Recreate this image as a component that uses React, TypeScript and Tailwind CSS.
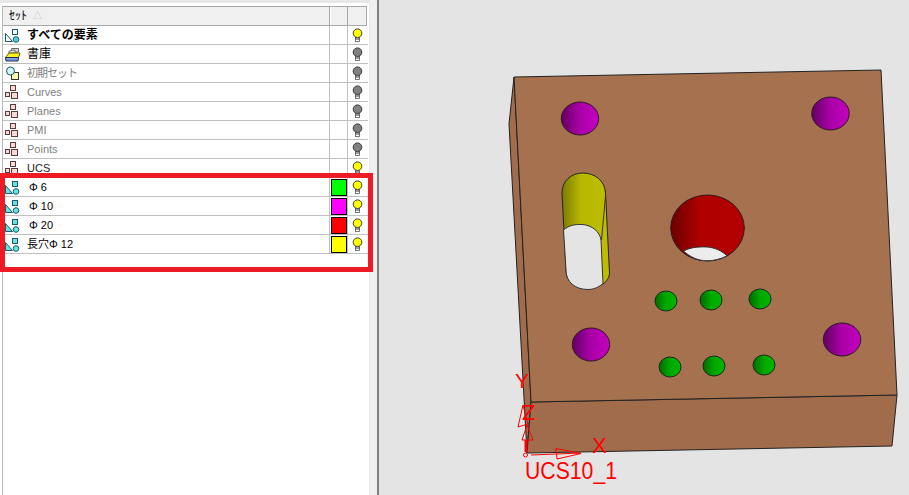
import React from "react";

const Bulb = ({ on }: { on: boolean }) => (
  <svg width="11" height="14" viewBox="0 0 11 14" className="block">
    <rect x="3.5" y="9" width="4" height="4.500" fill="#fff" stroke="#555" strokeWidth="0.8" />
    <path d="M3.500 11H7.500" stroke="#333" strokeWidth="1" fill="none" />
    <circle cx="5.500" cy="5.200" r="4.300" fill={on ? "#ffff00" : "#808080"} stroke="#3a3a3a" strokeWidth="1" />
  </svg>
);

const ElemIcon = ({ fill = "#66e3e0", soft = "#ffffff" }: { fill?: string; soft?: string }) => (
  <svg width="15" height="15" viewBox="0 0 15 15" className="block">
    <path d="M0.5 5.5V13.5H7.5Z" fill={soft} stroke="#1a5a6a" />
    <rect x="7.5" y="1.5" width="5" height="5" fill={soft} stroke="#1a5a6a" />
    <circle cx="11" cy="11.5" r="2.8" fill={fill} stroke="#1a5a6a" />
  </svg>
);

const BoxesIcon = () => (
  <svg width="15" height="15" viewBox="0 0 15 15" className="block">
    <rect x="5.5" y="0.5" width="5" height="5" fill="#ffd6d6" stroke="#5a3a3a" />
    <rect x="0.5" y="7.5" width="4" height="4" fill="#ffd6d6" stroke="#5a3a3a" />
    <rect x="6.5" y="7.5" width="6" height="6" fill="#ffd6d6" stroke="#5a3a3a" />
  </svg>
);

const LibraryIcon = () => (
  <svg width="16" height="15" viewBox="0 0 16 15" className="block">
    <path d="M6.500 1.500H13.500V5H6.500Z" fill="#d8d8d8" stroke="#666" />
    <path d="M4 4L10 3V6H4Z" fill="#e8e8e8" stroke="#777" />
    <path d="M0.500 10.500L4 6H15L13.500 10.500Z" fill="#ffee20" stroke="#6a6000" />
    <path d="M0.500 10.500H13.500L13 14H1Z" fill="#7f9fd8" stroke="#1a2a6a" />
  </svg>
);

const SetIcon = () => (
  <svg width="15" height="15" viewBox="0 0 15 15" className="block">
    <rect x="6.5" y="6.5" width="7" height="7" fill="#ffffb0" stroke="#333" />
    <circle cx="5.5" cy="5" r="4" fill="#d6f6fa" stroke="#1a5a6a" />
  </svg>
);

type Row = {
  label: string;
  icon: React.ReactNode;
  on: boolean;
  tone: string;
  swatch?: string;
};

const rows: Row[] = [
  { label: "すべての要素", icon: <ElemIcon fill="#55c8e8" />, on: true, tone: "font-bold text-black text-[12px]" },
  { label: "書庫", icon: <LibraryIcon />, on: false, tone: "text-black text-[12px]" },
  { label: "初期セット", icon: <SetIcon />, on: false, tone: "text-[#808080] text-[11px] tracking-[-1px]" },
  { label: "Curves", icon: <BoxesIcon />, on: false, tone: "text-[#808080] text-[11px]" },
  { label: "Planes", icon: <BoxesIcon />, on: false, tone: "text-[#808080] text-[11px]" },
  { label: "PMI", icon: <BoxesIcon />, on: false, tone: "text-[#808080] text-[11px]" },
  { label: "Points", icon: <BoxesIcon />, on: false, tone: "text-[#808080] text-[11px]" },
  { label: "UCS", icon: <BoxesIcon />, on: true, tone: "text-[#222] text-[11px]" },
  { label: "Φ 6", icon: <ElemIcon soft="#66e3e0" />, on: true, tone: "text-black text-[11px] pl-[2px]", swatch: "#00ff00" },
  { label: "Φ 10", icon: <ElemIcon soft="#66e3e0" />, on: true, tone: "text-black text-[11px] pl-[2px]", swatch: "#ff00ff" },
  { label: "Φ 20", icon: <ElemIcon soft="#66e3e0" />, on: true, tone: "text-black text-[11px] pl-[2px]", swatch: "#ff0000" },
  { label: "長穴Φ 12", icon: <ElemIcon soft="#66e3e0" />, on: true, tone: "text-black text-[11px]", swatch: "#ffff00" },
];

const Model = () => (
  <svg viewBox="379 0 530 495" className="block h-full w-full">
    <defs>
      <linearGradient id="purple" x1="0" x2="1" y1="0" y2="0">
        <stop offset="0" stopColor="#630063" />
        <stop offset="0.5" stopColor="#ab00a8" />
        <stop offset="1" stopColor="#c400c0" />
      </linearGradient>
      <linearGradient id="green" x1="0" x2="1" y1="0" y2="0">
        <stop offset="0" stopColor="#006b00" />
        <stop offset="0.5" stopColor="#00a800" />
        <stop offset="1" stopColor="#00b800" />
      </linearGradient>
      <linearGradient id="red" x1="0" x2="1" y1="0" y2="0">
        <stop offset="0" stopColor="#6a0000" />
        <stop offset="0.4" stopColor="#b00000" />
        <stop offset="1" stopColor="#b40000" />
      </linearGradient>
      <linearGradient id="olive" x1="0" x2="1" y1="0" y2="0">
        <stop offset="0" stopColor="#7a7a00" />
        <stop offset="0.4" stopColor="#b8b800" />
        <stop offset="1" stopColor="#bdbd00" />
      </linearGradient>
    </defs>

    <path d="M514 77L509 124L527 453L531 402Z" fill="#a06c4b" stroke="#222" strokeWidth="1" strokeLinejoin="round" />
    <path d="M531 402L897 395L892 446L527 453Z" fill="#a06c4c" stroke="#222" strokeWidth="1" strokeLinejoin="round" />
    <path d="M514 77L881 70L897 395L531 402Z" fill="#a5714f" stroke="#222" strokeWidth="1" strokeLinejoin="round" />

    {[
      [580, 118.5],
      [830.5, 113.5],
      [842, 339.5],
      [591, 344.5],
    ].map(([cx, cy]) => (
      <ellipse key={cx} cx={cx} cy={cy} rx="18.7" ry="16.5" fill="url(#purple)" stroke="#2a1a20" />
    ))}

    {[
      [666, 301],
      [711, 300],
      [760, 299],
      [670, 367],
      [714, 366],
      [764, 365],
    ].map(([cx, cy]) => (
      <ellipse key={cx} cx={cx} cy={cy} rx="11" ry="10" fill="url(#green)" stroke="#1a2a1a" />
    ))}

    <path
      d="M562 193C562 181 571 173 583 173C595 173 605 181 605.5 193L609.5 273C609.5 277 607 281 603 284L588 289C575 289 566 282 566 270Z"
      fill="url(#olive)"
      stroke="#222"
    />
    <path
      d="M563.5 230C568 226 574 224 582 224.500C592 225 600 232 601 240L603 283.500C599 287 594 289.500 588 289.500C575 289.500 566 282 566 270Z"
      fill="#e4e4e4"
      stroke="#333"
    />
    <path d="M605.500 196L601.500 240" stroke="#333" fill="none" />

    <ellipse cx="707.500" cy="228" rx="36.800" ry="33" fill="url(#red)" stroke="#2a1a1a" />
    <path d="M683.500 251C690 247.500 698 246.500 707 247C715 247.500 722 251 727 255.800C721 259 714 260.800 707 260.800C698 260.800 690 257 683.500 251Z" fill="#ececec" stroke="#333" />

    <g fill="none" stroke="#ff0000" strokeWidth="1">
      <path d="M523 405L518 427L528 424L523 405" />
      <path d="M522 440L527 425L533 440Z" />
      <path d="M531 455L581 453" />
      <path d="M556 448.500L557 459L581 453.500Z" />
      <circle cx="525.500" cy="455" r="2" />
      <path d="M526 440V452" strokeWidth="3" />
    </g>
    <g fontFamily="'Liberation Sans', sans-serif" fill="#ff0000">
      <text x="515" y="388" fontSize="21">Y</text>
      <text x="522" y="420" fontSize="22">Z</text>
      <text x="592" y="453" fontSize="22">X</text>
      <text x="525" y="479" fontSize="23.500" textLength="92" lengthAdjust="spacingAndGlyphs">UCS10_1</text>
    </g>
  </svg>
);

export default function App() {
  return (
    <div className="relative flex h-[495px] w-[909px] overflow-hidden bg-white font-['Liberation_Sans','Noto_Sans_CJK_JP',sans-serif]">
      <div className="flex w-[370px] shrink-0 flex-col border-t-[3px] border-r border-[#e8e8e8] bg-white pl-[2px] pt-[3px]">
        <div className="flex h-full flex-col border-l border-[#b8b8b8]">
          <div className="flex h-[20px] w-[364px] shrink-0 border-y border-[#a8a8a8] bg-[#f0f0f0]">
            <div className="flex w-[327px] items-center gap-[6px] border-r border-[#a8a8a8] pl-[6px] text-[12px] leading-none text-black">
              <span>ｾｯﾄ</span>
              <span className="text-[9px] text-[#c0c0c0]">△</span>
            </div>
            <div className="w-[18px] border-x border-l-white border-r-[#a8a8a8]" />
            <div className="w-[19px] border-r border-[#a8a8a8]" />
          </div>
          {rows.map((r) => (
            <div key={r.label} className="flex h-[19px] w-[365px] shrink-0 border-b border-[#c0c0c0]">
              <div className="flex w-[327px] items-center border-r border-[#c0c0c0]">
                <div className="flex w-[24px] shrink-0 items-center pl-[2px]">{r.icon}</div>
                <span className={`whitespace-nowrap leading-none ${r.tone}`}>{r.label}</span>
              </div>
              <div className="flex w-[18px] items-center justify-end border-r border-[#c0c0c0]">
                {r.swatch ? (
                  <span className="block h-[17px] w-[16px] border border-black" style={{ backgroundColor: r.swatch }} />
                ) : null}
              </div>
              <div className="flex w-[19px] items-center justify-center">
                <Bulb on={r.on} />
              </div>
            </div>
          ))}
        </div>
      </div>
      <div className="w-[9px] shrink-0 border-r-2 border-[#808080] bg-[#f0f0f0]" />
      <div className="flex-1 bg-[#e4e4e4]">
        <Model />
      </div>
      <div className="absolute left-0 top-[173px] h-[99px] w-[373px] border-[5px] border-[#ed1c24]" />
    </div>
  );
}
